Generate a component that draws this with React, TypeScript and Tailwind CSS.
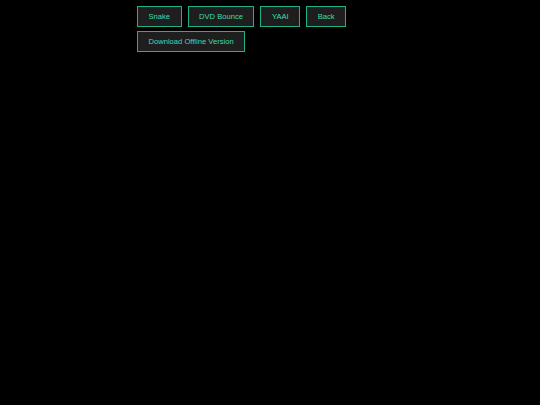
export default function App() {
  const buttons = ["Snake", "DVD Bounce", "YAAI", "Back", "Download Offline Version"];

  return (
    <div className="min-h-[405px] w-full bg-black font-['Liberation_Sans',Arial,sans-serif]">
      <div className="mx-auto flex w-[266px] flex-wrap gap-x-[6px] gap-y-[4px] pt-[6px]">
        {buttons.map((label) => (
          <button
            key={label}
            type="button"
            className="h-[21px] border border-[#22b08a] bg-[#1e1e1e] px-[10.5px] text-[7.6px] leading-none text-[#40dcae]"
          >
            {label}
          </button>
        ))}
      </div>
    </div>
  );
}
